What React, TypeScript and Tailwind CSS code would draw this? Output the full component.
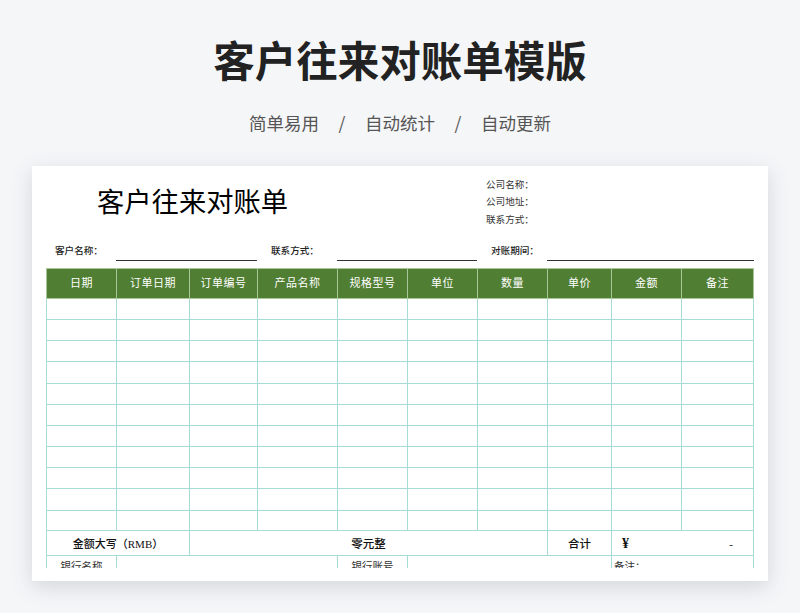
const cols = [70, 73, 68, 80, 70, 70, 70, 64, 70, 72];
const heads = ["日期", "订单日期", "订单编号", "产品名称", "规格型号", "单位", "数量", "单价", "金额", "备注"];
const rowHeights = [21, 21, 21, 22, 21, 21, 21, 21, 21, 22, 20];
const cjk = "font-['Liberation_Serif','Noto_Sans_CJK_SC',serif]";
const line = "border border-[#a6dcd4]";

export default function App() {
  return (
    <div className="flex h-[613px] w-[800px] flex-col items-center overflow-hidden bg-[#f5f6f8] font-['Noto_Sans_CJK_SC',sans-serif]">
      <h1 className="mt-[29px] h-[60px] text-[41.5px] leading-[60px] font-bold text-[#222222]">客户往来对账单模版</h1>
      <div className="mt-[21px] flex h-[26px] items-center text-[17.5px] leading-[26px] text-[#555555]">
        <span>简单易用</span>
        <span className="w-[46px] text-center">/</span>
        <span>自动统计</span>
        <span className="w-[46px] text-center">/</span>
        <span>自动更新</span>
      </div>
      <div className="mt-[30px] h-[415px] w-[736px] bg-white px-[14px] pb-[13px] shadow-[0_6px_20px_rgba(60,70,90,0.18)]">
        <div className={`h-full overflow-hidden ${cjk} text-[#111111]`}>
          <div className="flex h-[70px]">
            <div className="ml-[51px] w-[389px] pt-[19px] text-[27.3px] leading-[36px] text-black">客户往来对账单</div>
            <div className="flex flex-col pt-[10px] text-[9.6px] leading-[17.4px] text-[#333333]">
              <span>公司名称：</span>
              <span>公司地址：</span>
              <span>联系方式：</span>
            </div>
          </div>
          <div className="flex h-[32px] text-[9.6px] font-medium text-[#222222]">
            <div className="flex w-[70px] items-center pb-[1px] pl-[9px]">客户名称：</div>
            <div className="h-[25px] w-[141px] border-b border-[#333333]" />
            <div className="flex w-[80px] items-center pb-[1px] pl-[14px]">联系方式：</div>
            <div className="h-[25px] w-[140px] border-b border-[#333333]" />
            <div className="flex w-[70px] items-center pb-[1px] pl-[14px]">对账期间：</div>
            <div className="h-[25px] w-[207px] border-b border-[#333333]" />
          </div>
          <table className="w-[707px] table-fixed border-collapse text-center">
            <colgroup>
              {cols.map((w, i) => (
                <col key={i} style={{ width: w }} />
              ))}
            </colgroup>
            <thead>
              <tr className="h-[30px] bg-[#507e32] text-[11px] tracking-[0.5px] text-white">
                {heads.map((h) => (
                  <th key={h} className="border border-[#a9c79a] p-0 font-normal">{h}</th>
                ))}
              </tr>
            </thead>
            <tbody>
              {rowHeights.map((h, i) => (
                <tr key={i} style={{ height: h }}>
                  {heads.map((c) => (
                    <td key={c} className={`${line} p-0`} />
                  ))}
                </tr>
              ))}
              <tr className="h-[25px] text-[11px] leading-[16px] font-medium">
                <td colSpan={2} className={`${line} p-0 pt-[1px]`}>金额大写（RMB）</td>
                <td colSpan={5} className={`${line} p-0 pt-[1px] text-[11.5px]`}>零元整</td>
                <td className={`${line} p-0 pt-[1px] text-[11.5px]`}>合计</td>
                <td colSpan={2} className={`${line} p-0 pt-[1px]`}>
                  <div className="flex items-center justify-between pr-[20px] pl-[10px]">
                    <span className="text-[14px] leading-[16px] font-bold">¥</span>
                    <span>-</span>
                  </div>
                </td>
              </tr>
              <tr className="h-[30px] align-top text-[10.5px] text-[#333333]">
                <td className={`${line} p-0 pt-[3px]`}>银行名称</td>
                <td colSpan={3} className={`${line} p-0`} />
                <td className={`${line} p-0 pt-[3px]`}>银行账号</td>
                <td colSpan={3} className={`${line} p-0`} />
                <td colSpan={2} className={`${line} p-0 pt-[3px] pl-[2px] text-left`}>备注：</td>
              </tr>
            </tbody>
          </table>
        </div>
      </div>
    </div>
  );
}
